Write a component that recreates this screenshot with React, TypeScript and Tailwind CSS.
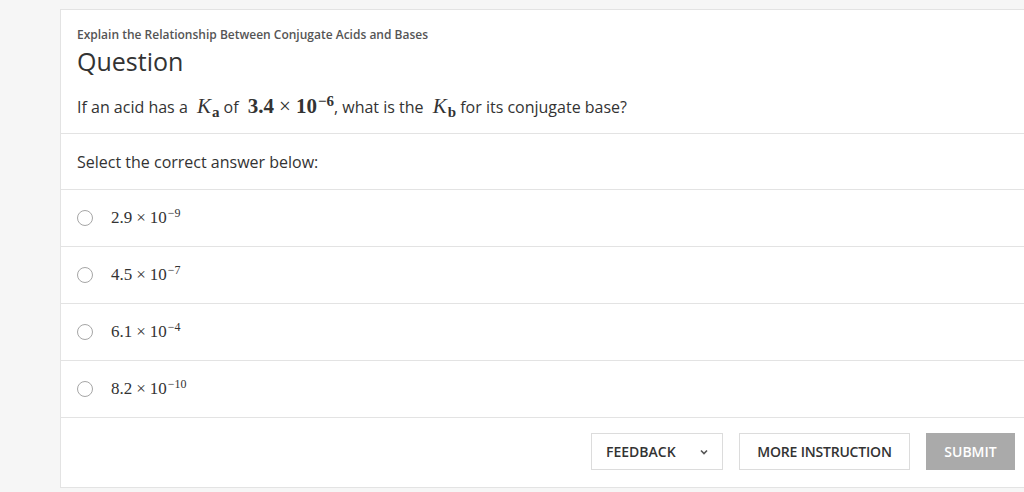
import { FC } from "react"

const serif = { fontFamily: '"Liberation Serif", "DejaVu Serif", serif' }

const Power: FC<{ base: string; exp: string; className?: string; timesClass?: string; supClass?: string }> = ({ base, exp, className, timesClass, supClass }) => (
	<span className={className} style={serif}>
		{base}
		<span className={timesClass}>×</span>
		10
		<sup className={supClass}>{exp}</sup>
	</span>
)

const answers = [
	{ base: "2.9", exp: "−9" },
	{ base: "4.5", exp: "−7" },
	{ base: "6.1", exp: "−4" },
	{ base: "8.2", exp: "−10" },
]

const Kvar: FC<{ sub: string }> = ({ sub }) => (
	<span className="ml-[5px] text-[21px] whitespace-nowrap" style={serif}>
		<i>K</i>
		<sub className="text-[15px] font-bold ml-[1px]">{sub}</sub>
	</span>
)

const App: FC = () => {
	return (
		<div className="w-[1024px] h-[492px] overflow-hidden bg-[#f6f6f6]" style={{ fontFamily: '"Open Sans", sans-serif' }}>
			<div className="ml-[60px] mt-[9px] w-[972px] bg-white border border-[#e3e3e3]">
				{/* header */}
				<div className="px-4 pt-[17px] pb-[14px] border-b border-[#e3e3e3]">
					<p className="text-[12px] leading-[16px] font-semibold text-[#555]">
						Explain the Relationship Between Conjugate Acids and Bases
					</p>
					<h1 className="text-[25px] leading-[34px] text-[#333] mt-[1px]">Question</h1>
					<p className="text-[16px] leading-[24px] text-[#333] mt-[16px] flex items-baseline whitespace-pre">
						{"If an acid has a "}
						<Kvar sub="a" />
						{" of "}
						<Power
							base="3.4"
							exp="−6"
							className="ml-[5px] text-[21px] font-bold"
							timesClass="mx-[5px] font-normal"
							supClass="text-[15px] font-bold ml-[1px]"
						/>
						{", what is the "}
						<Kvar sub="b" />
						{" for its conjugate base?"}
					</p>
				</div>

				{/* prompt */}
				<div className="h-[56px] px-4 flex items-center border-b border-[#e3e3e3]">
					<p className="text-[16px] text-[#333]">Select the correct answer below:</p>
				</div>

				{/* answers */}
				{answers.map(a => (
					<label key={a.base} className="h-[57px] px-4 flex items-center border-b border-[#e3e3e3] cursor-pointer">
						<span className="w-[16px] h-[16px] rounded-full border-[1.5px] border-[#a6a6a6] bg-white shrink-0" />
						<Power
							base={a.base}
							exp={a.exp}
							className="ml-[18px] text-[17px] text-[#333]"
							timesClass="mx-[4px]"
							supClass="text-[12px] ml-[1px]"
						/>
					</label>
				))}

				{/* footer */}
				<div className="pt-[15px] pb-[17px] pr-4 flex justify-end gap-[16px]">
					<button className="w-[132px] h-[37px] border border-[#dcdcdc] bg-white flex items-center justify-between pl-[14px] pr-[13px] text-[14px] font-semibold text-[#333]">
						FEEDBACK
						<svg width="10" height="10" viewBox="0 0 10 10" fill="none" stroke="#555" strokeWidth="1.6">
							<path d="M2 3.5 5 6.5 8 3.5" />
						</svg>
					</button>
					<button className="w-[171px] h-[37px] border border-[#dcdcdc] bg-white text-[14px] font-semibold text-[#333] tracking-[-0.2px]">
						MORE INSTRUCTION
					</button>
					<button className="w-[89px] h-[37px] bg-[#aaaaaa] text-[14px] font-semibold text-white">SUBMIT</button>
				</div>
			</div>
		</div>
	)
}

export default App
